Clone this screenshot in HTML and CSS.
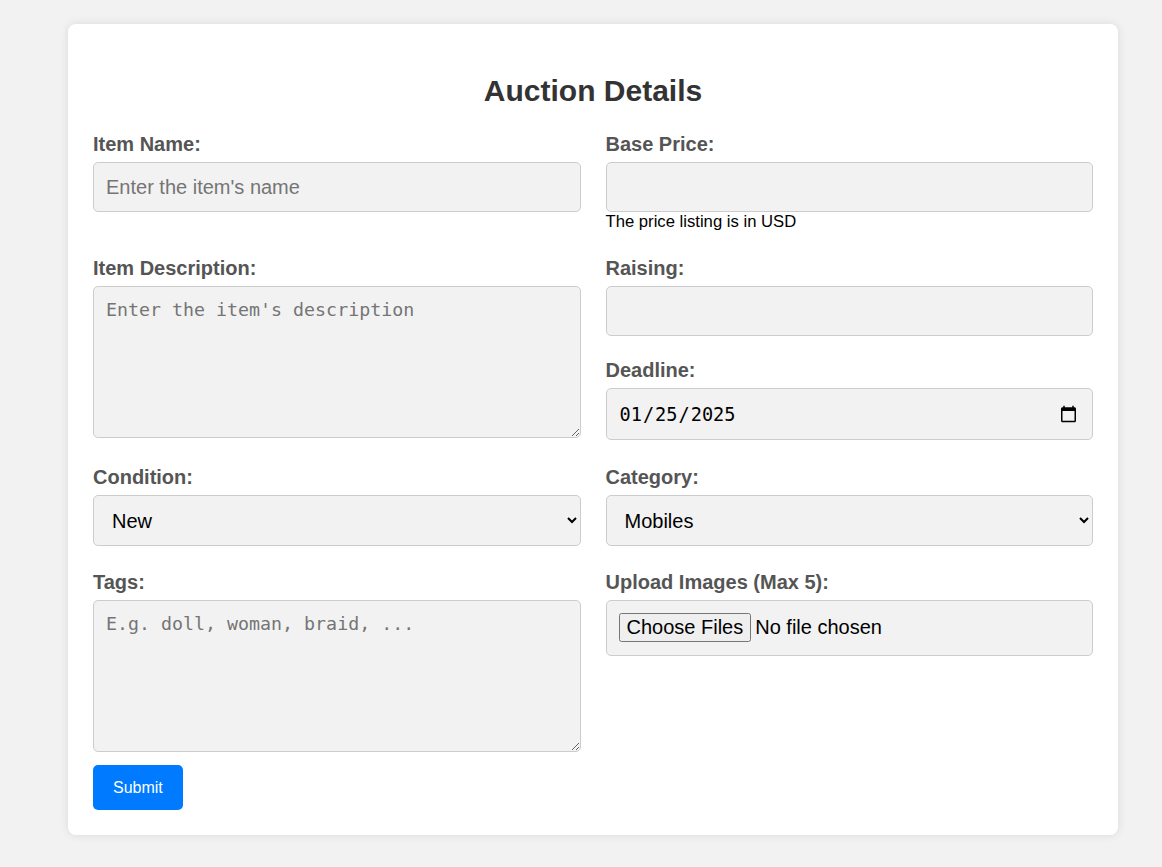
FILE: index.html
```html
<!DOCTYPE html>
<html lang="en">
<head>
<meta charset="utf-8">
<title>Auction Details</title>
<link rel="stylesheet" href="styles.css">
</head>
<body>
<div class="card">
  <h2 class="title">Auction Details</h2>
  <form class="form">
    <div class="grid">
      <div class="group">
        <label class="label" for="name">Item Name:</label>
        <input class="control" id="name" type="text" placeholder="Enter the item's name">
      </div>
      <div class="group">
        <label class="label" for="price">Base Price:</label>
        <input class="control" id="price" type="number">
        <small class="hint">The price listing is in USD</small>
      </div>

      <div class="group">
        <label class="label" for="desc">Item Description:</label>
        <textarea class="control area" id="desc" placeholder="Enter the item's description"></textarea>
      </div>
      <div class="stack">
        <div class="group">
          <label class="label" for="raise">Raising:</label>
          <input class="control" id="raise" type="number">
        </div>
        <div class="group">
          <label class="label" for="deadline">Deadline:</label>
          <input class="control date" id="deadline" type="date" value="2025-01-25">
        </div>
      </div>

      <div class="group">
        <label class="label" for="cond">Condition:</label>
        <select class="control select" id="cond">
          <option>New</option>
          <option>Used</option>
        </select>
      </div>
      <div class="group">
        <label class="label" for="cat">Category:</label>
        <select class="control select" id="cat">
          <option>Mobiles</option>
          <option>Laptops</option>
        </select>
      </div>

      <div class="group">
        <label class="label" for="tags">Tags:</label>
        <textarea class="control area" id="tags" placeholder="E.g. doll, woman, braid, ..."></textarea>
      </div>
      <div class="group">
        <label class="label" for="imgs">Upload Images (Max 5):</label>
        <input class="control file" id="imgs" type="file" multiple>
      </div>
    </div>
    <button class="submit" type="button">Submit</button>
  </form>
</div>
</body>
</html>
```
FILE: styles.css
```css
html, body {
  margin: 0;
  padding: 0;
}

body {
  background: #f2f2f2;
  font-family: "Liberation Sans", Arial, sans-serif;
  font-size: 20px;
  color: #000;
}

.card {
  box-sizing: border-box;
  width: 1050px;
  margin: 24px 0 32px 68px;
  padding: 25px;
  background: #fff;
  border-radius: 8px;
  box-shadow: 0 0 10px rgba(0, 0, 0, 0.1);
}

.title {
  margin: 25px 0 25px;
  font-size: 30px;
  line-height: 34px;
  font-weight: bold;
  text-align: center;
  color: #333;
}

.form {
  margin: 0;
}

.grid {
  display: grid;
  grid-template-columns: 1fr 1fr;
  column-gap: 25px;
  row-gap: 23px;
}

.stack {
  display: flex;
  flex-direction: column;
  gap: 23px;
}

.group {
  display: flex;
  flex-direction: column;
}

.label {
  display: block;
  font-weight: bold;
  font-size: 20px;
  line-height: 23px;
  color: #555;
  margin-bottom: 6px;
}

.control {
  display: block;
  box-sizing: border-box;
  width: 100%;
  margin: 0;
  height: 50px;
  padding: 12px;
  border: 1px solid #ccc;
  border-radius: 5px;
  background: #f2f2f2;
  font-family: "Liberation Sans", Arial, sans-serif;
  font-size: 20px;
  color: #000;
}

.control::placeholder {
  color: #757575;
}

.area {
  height: 152px;
  margin-bottom: 5px;
  font-family: "DejaVu Sans Mono", "Liberation Mono", monospace;
  font-size: 18.3px;
  line-height: 21px;
}

.date {
  height: 52px;
  font-family: "DejaVu Sans Mono", "Liberation Mono", monospace;
  font-size: 18.6px;
}

.select {
  height: 51px;
  margin-bottom: 2px;
  padding: 12px 12px 12px 14px;
}

.file {
  height: 56px;
  padding: 12px;
}

.hint {
  display: block;
  font-size: 16.67px;
  line-height: 19px;
  margin-bottom: 3px;
  color: #000;
}

.submit {
  display: block;
  margin-top: 8px;
  height: 45px;
  padding: 0 20px;
  border: none;
  border-radius: 5px;
  background: #007bff;
  color: #fff;
  font-family: "Liberation Sans", Arial, sans-serif;
  font-size: 16px;
  cursor: pointer;
}
```
